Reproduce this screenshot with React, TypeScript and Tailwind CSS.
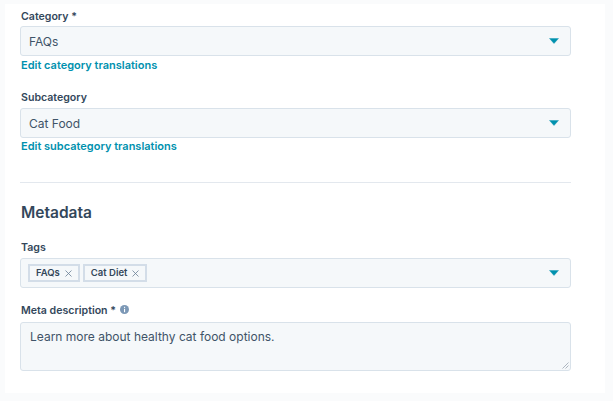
const font = "[font-family:Inter,'Open_Sans',sans-serif]";

function Caret() {
  return (
    <svg width="10" height="6" viewBox="0 0 10 6" className="shrink-0">
      <path d="M0.5 0.5h9L5 5.5z" fill="#0091ae" stroke="#0091ae" strokeWidth="0.4" strokeLinejoin="round" />
    </svg>
  );
}

function Tag({ text }: { text: string }) {
  return (
    <span className="flex h-[18px] items-center gap-[5px] border-2 border-[#d3dde8] bg-[#f5f8fa] pl-[6px] pr-[6px] text-[9.5px] leading-none font-semibold text-[#33475b]">
      {text}
      <svg width="7" height="7" viewBox="0 0 7 7">
        <path d="M0.5 0.5l6 6M6.5 0.5l-6 6" stroke="#6a7f95" strokeWidth="0.8" fill="none" />
      </svg>
    </span>
  );
}

function Select({ value }: { value: string }) {
  return (
    <div className="flex h-[30px] items-center justify-between rounded-[3px] border border-[#d9e2ea] bg-[#f5f8fa] pl-[8px] pr-[11px]">
      <span className="pt-[2px] text-[12px] leading-none text-[#3f5468]">{value}</span>
      <Caret />
    </div>
  );
}

function Label({ children }: { children: React.ReactNode }) {
  return <div className="pl-px text-[10.6px] leading-[14px] font-semibold text-[#33475b]">{children}</div>;
}

function EditLink({ children }: { children: React.ReactNode }) {
  return <div className="mt-[2px] pl-px text-[11px] leading-[14px] font-semibold text-[#0091ae]">{children}</div>;
}

export default function App() {
  return (
    <div className={`h-[401px] w-[613px] overflow-hidden bg-[#fafbfc] pt-[4px] pl-[5px] ${font}`}>
      <div className="h-[389px] w-[600px] bg-white pt-[6px] pr-[34px] pl-[15px]">
        <Label>Category *</Label>
        <div className="mt-[2px]"><Select value="FAQs" /></div>
        <EditLink>Edit category translations</EditLink>

        <div className="mt-[19px]"><Label>Subcategory</Label></div>
        <div className="mt-[3px]"><Select value="Cat Food" /></div>
        <div className="-mt-px"><EditLink>Edit subcategory translations</EditLink></div>

        <div className="mt-[29px] h-px bg-[#e3e8ee]" />

        <h2 className="pl-px mt-[20px] text-[15.5px] leading-[20px] font-semibold text-[#33475b]">Metadata</h2>

        <div className="mt-[18px]"><Label>Tags</Label></div>
        <div className="mt-[3px] flex h-[30px] items-center justify-between rounded-[3px] border border-[#d9e2ea] bg-[#f5f8fa] pl-[7px] pr-[11px]">
          <div className="flex gap-[3px]">
            <Tag text="FAQs" />
            <Tag text="Cat Diet" />
          </div>
          <Caret />
        </div>

        <div className="mt-[16px] flex items-center gap-[4px]">
          <Label>Meta description *</Label>
          <svg width="9" height="9" viewBox="0 0 9 9" className="-mt-[3px]">
            <circle cx="4.5" cy="4.5" r="4.5" fill="#7c98b6" />
            <rect x="4" y="3.8" width="1.1" height="3.4" fill="#fff" />
            <rect x="4" y="1.8" width="1.1" height="1.1" fill="#fff" />
          </svg>
        </div>
        <div className="relative mt-[4px] h-[49px] rounded-[3px] border border-[#d9e2ea] bg-[#f5f8fa] pt-[6px] pl-[9px] text-[12px] leading-[16px] text-[#3f5468]">
          Learn more about healthy cat food options.
          <svg width="7" height="7" viewBox="0 0 7 7" className="absolute right-[1px] bottom-[1px]">
            <path d="M0.5 6.5l6-6M3.5 6.5l3-3" stroke="#9aa5b1" strokeWidth="0.8" fill="none" />
          </svg>
        </div>
      </div>
    </div>
  );
}
